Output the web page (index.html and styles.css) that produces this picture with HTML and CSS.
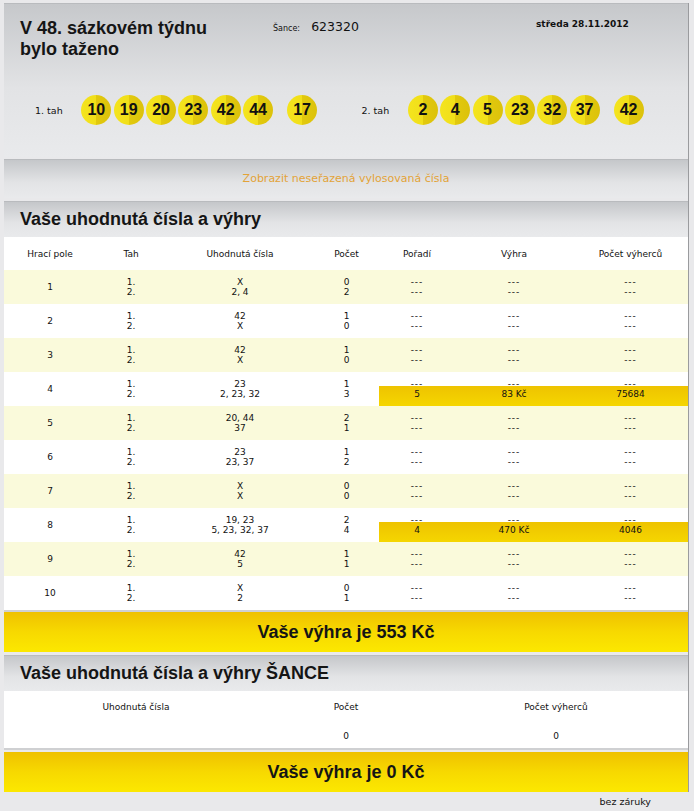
FILE: index.html
```html
<!DOCTYPE html>
<html lang="cs">
<head>
<meta charset="utf-8">
<title>Výsledky losování</title>
<link rel="stylesheet" href="styles.css">
</head>
<body>
<div class="wrap">
  <section class="panel draw">
    <div class="draw-top">
      <h1 class="title">V 48. sázkovém týdnu<br>bylo taženo</h1>
      <div class="sance"><span class="sance-lbl">Šance:</span> <span class="sance-num">623320</span></div>
      <div class="date">středa 28.11.2012</div>
    </div>
    <div class="draws">
      <div class="tah">
        <span class="tah-lbl">1. tah</span>
        <span class="ball">10</span><span class="ball">19</span><span class="ball">20</span><span class="ball">23</span><span class="ball">42</span><span class="ball">44</span><span class="ball bonus">17</span>
      </div>
      <div class="tah">
        <span class="tah-lbl">2. tah</span>
        <span class="ball">2</span><span class="ball">4</span><span class="ball">5</span><span class="ball">23</span><span class="ball">32</span><span class="ball">37</span><span class="ball bonus">42</span>
      </div>
    </div>
  </section>

  <div class="panel toggle">Zobrazit neseřazená vylosovaná čísla</div>

  <h2 class="panel sec-head">Vaše uhodnutá čísla a výhry</h2>
  <div class="tbl">
    <div class="thead">
      <span>Hrací pole</span><span>Tah</span><span>Uhodnutá čísla</span><span>Počet</span><span>Pořadí</span><span>Výhra</span><span>Počet výherců</span>
    </div>

    <div class="row alt">
      <span class="pole">1</span>
      <span class="l1">1.</span><span class="l1">X</span><span class="l1">0</span><span class="l1 d">---</span><span class="l1 d">---</span><span class="l1 d">---</span>
      <span class="l2">2.</span><span class="l2">2, 4</span><span class="l2">2</span><span class="l2 d">---</span><span class="l2 d">---</span><span class="l2 d">---</span>
    </div>
    <div class="row">
      <span class="pole">2</span>
      <span class="l1">1.</span><span class="l1">42</span><span class="l1">1</span><span class="l1 d">---</span><span class="l1 d">---</span><span class="l1 d">---</span>
      <span class="l2">2.</span><span class="l2">X</span><span class="l2">0</span><span class="l2 d">---</span><span class="l2 d">---</span><span class="l2 d">---</span>
    </div>
    <div class="row alt">
      <span class="pole">3</span>
      <span class="l1">1.</span><span class="l1">42</span><span class="l1">1</span><span class="l1 d">---</span><span class="l1 d">---</span><span class="l1 d">---</span>
      <span class="l2">2.</span><span class="l2">X</span><span class="l2">0</span><span class="l2 d">---</span><span class="l2 d">---</span><span class="l2 d">---</span>
    </div>
    <div class="row">
      <span class="pole">4</span>
      <span class="l1">1.</span><span class="l1">23</span><span class="l1">1</span><span class="l1 d">---</span><span class="l1 d">---</span><span class="l1 d">---</span>
      <span class="l2">2.</span><span class="l2">2, 23, 32</span><span class="l2">3</span>
      <div class="hit"><span>5</span><span>83 Kč</span><span>75684</span></div>
    </div>
    <div class="row alt">
      <span class="pole">5</span>
      <span class="l1">1.</span><span class="l1">20, 44</span><span class="l1">2</span><span class="l1 d">---</span><span class="l1 d">---</span><span class="l1 d">---</span>
      <span class="l2">2.</span><span class="l2">37</span><span class="l2">1</span><span class="l2 d">---</span><span class="l2 d">---</span><span class="l2 d">---</span>
    </div>
    <div class="row">
      <span class="pole">6</span>
      <span class="l1">1.</span><span class="l1">23</span><span class="l1">1</span><span class="l1 d">---</span><span class="l1 d">---</span><span class="l1 d">---</span>
      <span class="l2">2.</span><span class="l2">23, 37</span><span class="l2">2</span><span class="l2 d">---</span><span class="l2 d">---</span><span class="l2 d">---</span>
    </div>
    <div class="row alt">
      <span class="pole">7</span>
      <span class="l1">1.</span><span class="l1">X</span><span class="l1">0</span><span class="l1 d">---</span><span class="l1 d">---</span><span class="l1 d">---</span>
      <span class="l2">2.</span><span class="l2">X</span><span class="l2">0</span><span class="l2 d">---</span><span class="l2 d">---</span><span class="l2 d">---</span>
    </div>
    <div class="row">
      <span class="pole">8</span>
      <span class="l1">1.</span><span class="l1">19, 23</span><span class="l1">2</span><span class="l1 d">---</span><span class="l1 d">---</span><span class="l1 d">---</span>
      <span class="l2">2.</span><span class="l2">5, 23, 32, 37</span><span class="l2">4</span>
      <div class="hit"><span>4</span><span>470 Kč</span><span>4046</span></div>
    </div>
    <div class="row alt">
      <span class="pole">9</span>
      <span class="l1">1.</span><span class="l1">42</span><span class="l1">1</span><span class="l1 d">---</span><span class="l1 d">---</span><span class="l1 d">---</span>
      <span class="l2">2.</span><span class="l2">5</span><span class="l2">1</span><span class="l2 d">---</span><span class="l2 d">---</span><span class="l2 d">---</span>
    </div>
    <div class="row">
      <span class="pole">10</span>
      <span class="l1">1.</span><span class="l1">X</span><span class="l1">0</span><span class="l1 d">---</span><span class="l1 d">---</span><span class="l1 d">---</span>
      <span class="l2">2.</span><span class="l2">2</span><span class="l2">1</span><span class="l2 d">---</span><span class="l2 d">---</span><span class="l2 d">---</span>
    </div>
  </div>
  <div class="win">Vaše výhra je 553 Kč</div>

  <h2 class="panel sec-head">Vaše uhodnutá čísla a výhry ŠANCE</h2>
  <div class="tbl sance-tbl">
    <div class="s-head"><span>Uhodnutá čísla</span><span>Počet</span><span>Počet výherců</span></div>
    <div class="s-row"><span></span><span>0</span><span>0</span></div>
  </div>
  <div class="win">Vaše výhra je 0 Kč</div>
</div>
<div class="foot">bez záruky</div>
</body>
</html>
```

FILE: styles.css
```css
* { box-sizing: border-box; }

body {
  margin: 0;
  background: #e9e9eb;
  font-family: "DejaVu Sans", Verdana, sans-serif;
  color: #111;
}

.wrap {
  width: 685px;
  margin: 3px 0 0 4px;
  border-right: 1px solid #9a9b9e;
}

.panel {
  margin: 0;
  border-top: 1px solid #b9bbbe;
  background: linear-gradient(#c5c7ca, #e3e4e6 60%, #e9eaec);
}

/* header with drawn numbers */
.draw {
  padding: 14px 0 32px 16px;
  background: linear-gradient(#c6c8cb, #e2e3e5 55%, #e9eaec);
}

.draw-top {
  display: grid;
  grid-template-columns: 253px 263px 1fr;
  align-items: start;
}

.title {
  margin: 0;
  font-family: "Liberation Sans", Arial, sans-serif;
  font-weight: bold;
  font-size: 18px;
  line-height: 21px;
  color: #151515;
}

.sance {
  line-height: 16px;
  white-space: nowrap;
}
.sance-lbl { font-size: 8px; }
.sance-num { font-size: 12.5px; margin-left: 6px; }

.date {
  font-size: 9px;
  font-weight: bold;
  line-height: 12px;
}

.draws {
  display: flex;
  margin: 35px 0 0 15px;
}

.tah {
  display: flex;
  align-items: center;
  gap: 2.35px;
  width: 328px;
}

.tah-lbl {
  width: 44px;
  font-size: 9.5px;
}

.ball {
  width: 30px;
  height: 30px;
  border-radius: 50%;
  display: flex;
  align-items: center;
  justify-content: center;
  font-family: "Liberation Sans", Arial, sans-serif;
  font-weight: bold;
  font-size: 16px;
  color: #111;
  background: linear-gradient(90deg, #f4e41e 0%, #f1df19 49%, #e2c90d 51%, #dcc20b 100%);
}
.ball.bonus { margin-left: 11.65px; }

/* toggle bar */
.toggle {
  margin-top: 2px;
  height: 39px;
  line-height: 38px;
  text-align: center;
  font-size: 11px;
  color: #e3a338;
}

/* section heading */
.sec-head {
  margin-top: 3px;
  height: 36px;
  padding-left: 16px;
  font-family: "Liberation Sans", Arial, sans-serif;
  font-weight: bold;
  font-size: 18px;
  line-height: 35px;
  color: #151515;
}

/* main table */
.tbl {
  background: #fff;
  font-size: 9px;
  border-bottom: 2px solid #cfd0d2;
}

.thead,
.row {
  display: grid;
  grid-template-columns: 92px 70px 148px 65px 76px 118px 115px;
  text-align: center;
}

.thead {
  height: 33px;
  align-items: center;
}

.row {
  grid-template-rows: 17px 17px;
  height: 34px;
  line-height: 10px;
}
.row.alt { background: #fafadb; }

.pole {
  grid-row: 1 / 3;
  grid-column: 1;
  align-self: center;
}
.l1 { grid-row: 1; padding-top: 7px; }
.l2 { grid-row: 2; }
.d { letter-spacing: 1px; }

.hit {
  grid-row: 2;
  grid-column: 5 / 8;
  display: grid;
  grid-template-columns: 76px 118px 115px;
  margin-top: -3px;
  padding-top: 3px;
  background: linear-gradient(#eec300, #f5d600);
}

/* win bar */
.win {
  height: 40px;
  line-height: 40px;
  text-align: center;
  font-family: "Liberation Sans", Arial, sans-serif;
  font-weight: bold;
  font-size: 18px;
  color: #151515;
  background: linear-gradient(#efc100, #f7d900 50%, #fce800);
}

/* šance table */
.sance-tbl {
  margin-bottom: 2px;
}
.s-head,
.s-row {
  display: grid;
  grid-template-columns: 264px 156px 264px;
  text-align: center;
  align-items: center;
}
.s-head { height: 32px; }
.s-row { height: 25px; }

.foot {
  width: 684px;
  margin-left: 4px;
  padding: 4px 37px 0 0;
  text-align: right;
  font-size: 9.5px;
  line-height: 12px;
}
```
